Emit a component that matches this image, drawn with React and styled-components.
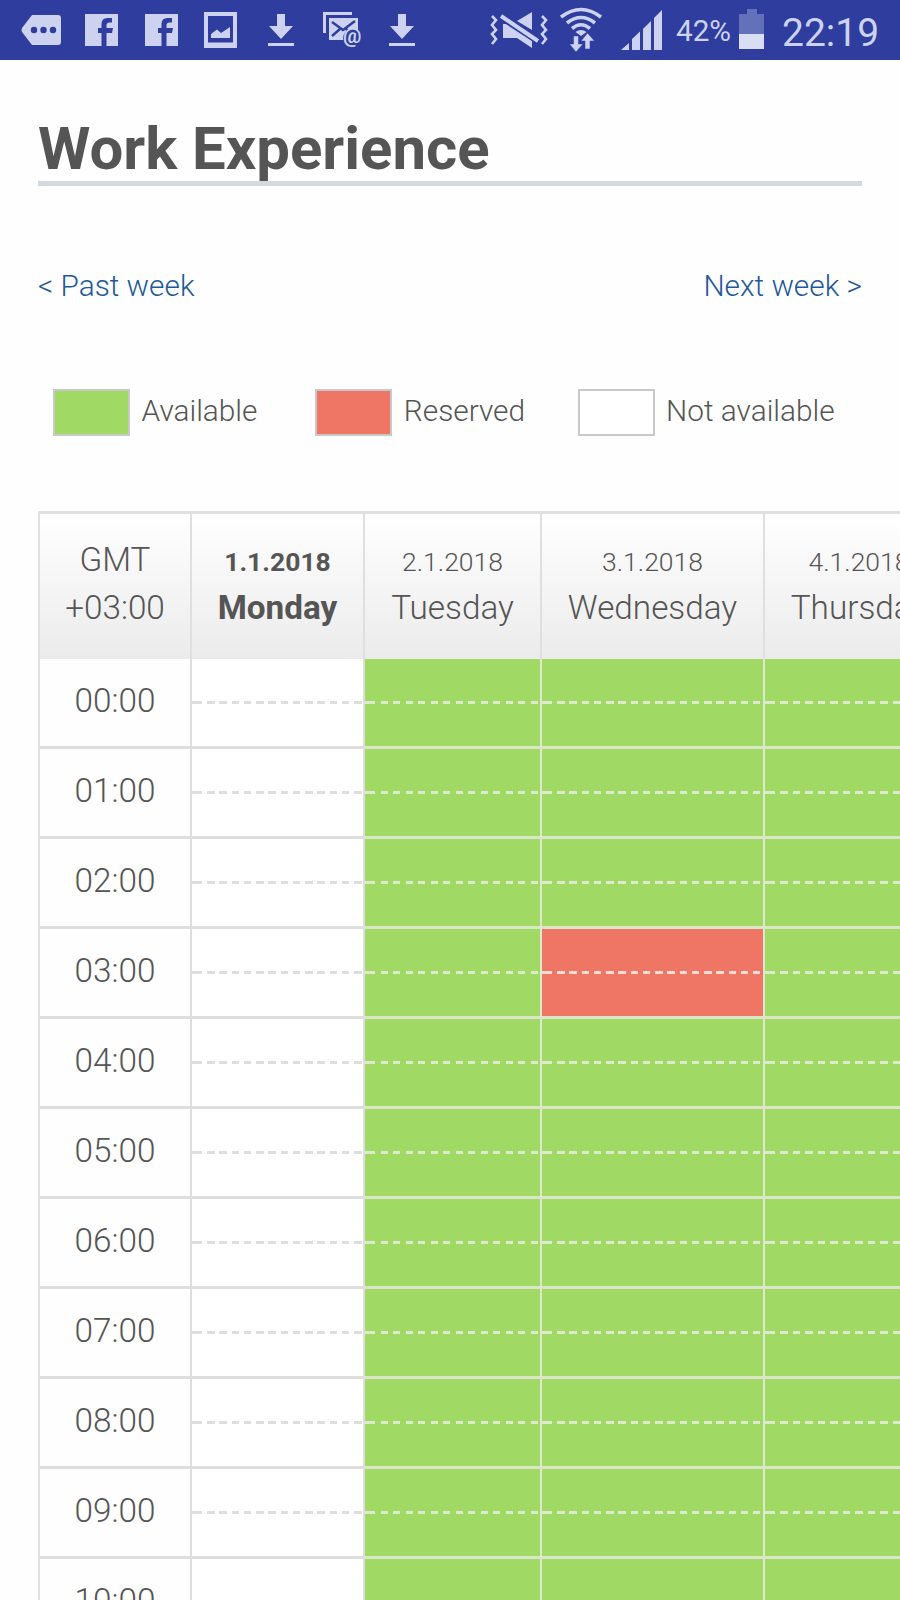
import React from "react";
import styled, { createGlobalStyle } from "styled-components";

const GlobalStyle = createGlobalStyle`
  * { box-sizing: border-box; }
  html, body { margin: 0; padding: 0; background: #fefefe; overflow: hidden; }
`;

const Screen = styled.div`
  width: 900px;
  height: 1600px;
  overflow: hidden;
  background: #fefefe;
  color: #555;
  font-family: Roboto, "Liberation Sans", sans-serif;
  font-weight: 300;
`;

const StatusBar = styled.header`
  display: flex;
  height: 60px;
  background: #2e3d9e;
  color: #ccd2f0;
  line-height: 60px;
  white-space: nowrap;
`;

const Icon = styled.svg`
  flex: none;
  width: ${(p) => p.$w}px;
  height: 60px;
  margin-left: ${(p) => p.$gap}px;
  fill: #ccd2f0;
`;

const BatteryText = styled.span`
  width: 63px;
  margin-left: 14px;
  padding-top: 1px;
  font-size: 29.7px;
  font-weight: 400;
`;

const Clock = styled.span`
  margin-left: 18px;
  padding-top: 3px;
  font-size: 39px;
  font-weight: 400;
`;

const Page = styled.main`
  padding: 54px 0 0 38px;
`;

const Title = styled.h1`
  width: 824px;
  height: 72px;
  margin: 0;
  border-bottom: 5px solid #d3d9dd;
  font-size: 59.9px;
  font-weight: 700;
  line-height: 70px;
  color: #555;
`;

const WeekNav = styled.nav`
  display: flex;
  justify-content: space-between;
  width: 824px;
  margin-top: 79px;
`;

const WeekLink = styled.a`
  font-size: 29.8px;
  line-height: 42px;
  height: 40px;
  color: #1f5a98;
`;

const Legend = styled.div`
  display: grid;
  grid-template-columns: 262.3px 262.3px 1fr;
  margin: 84px 0 75px 15px;
`;

const LegendItem = styled.div`
  display: flex;
  gap: 11.5px;
  height: 47px;
  font-size: 29.8px;
  line-height: 43px;
  white-space: nowrap;
`;

const fills = { available: "#a1d965", reserved: "#ef7564", none: "#fff" };
const lines = { available: "#dfe9cd", reserved: "#f2dcd4", none: "#dedede" };

const Swatch = styled.span`
  width: 77px;
  height: 47px;
  border: 2px solid #c9c9c9;
  background: ${(p) => fills[p.$kind]};
`;

const Calendar = styled.section`
  width: 917px;
  border-top: 3px solid #e0e0e0;
  border-left: 2px solid #e0e0e0;
`;

const Row = styled.div`
  display: grid;
  grid-template-columns: 152px 173px 177px 223px 190px;
`;

const HeadCell = styled.div`
  height: 145px;
  padding-top: 22px;
  border-right: 2px solid #dfdfdf;
  background: linear-gradient(#fff, #ebebeb);
  text-align: center;
  font-weight: ${(p) => (p.$today ? 700 : 300)};
  line-height: 48px;
  white-space: nowrap;
`;

const DateLine = styled.div`
  font-size: ${(p) => (p.$small ? 26.5 : 33.3)}px;
  padding-top: ${(p) => (p.$small ? 2 : 0)}px;
  height: 48px;
`;

const TimeCell = styled.div`
  height: 90px;
  border-right: 2px solid #dedede;
  border-bottom: 3px solid #dedede;
  background: #fefefe;
  text-align: center;
  font-size: 33.3px;
  line-height: 83px;
`;

const Slot = styled.div`
  height: 90px;
  padding-top: 42px;
  border-right: 2px solid ${(p) => (p.$kind === "none" ? "#dedede" : "#dfe7d0")};
  border-bottom: 3px solid ${(p) => (p.$kind === "none" ? "#dedede" : "#dbe5c8")};
  background: ${(p) => fills[p.$kind]};
`;

const HalfHour = styled.div`
  height: 3px;
  background:
    linear-gradient(${(p) => lines[p.$kind]}, ${(p) => lines[p.$kind]}) 0 0 / 4px 3px no-repeat,
    repeating-linear-gradient(
      to right,
      ${(p) => lines[p.$kind]} 0 7.4px,
      transparent 7.4px ${(p) => p.$step}px
    ) 2.6px 0 no-repeat;
`;

const MoreIcon = () => (
  <Icon $w={40} $gap={21} viewBox="0 0 40 60">
    <path d="M11 15H37Q40 15 40 18V42Q40 45 37 45H11L1 32Q0 30 1 28Z" />
    <g fill="#2e3d9e">
      <circle cx="13" cy="30" r="3.2" />
      <circle cx="22.500" cy="30" r="3.2" />
      <circle cx="32" cy="30" r="3.2" />
    </g>
  </Icon>
);

const FacebookIcon = ({ gap }) => (
  <Icon $w={33} $gap={gap} viewBox="0 0 33 60">
    <path d="M0 14H33V46H21.5V33H27L28 28H21.5V25Q21.5 22.5 24.5 22.5H27V18H22.5Q16.5 18 16.5 24V28H13V33H16.5V46H0Z" />
  </Icon>
);

const PictureIcon = () => (
  <Icon $w={33} $gap={26.5} viewBox="0 0 33 60">
    <path fillRule="evenodd" d="M0 12H33V48H0ZM4 16V42.500H29V16Z" />
    <path d="M7 38V34L13 29.500L17 33L26 27V38Z" />
  </Icon>
);

const DownloadIcon = ({ gap }) => (
  <Icon $w={26} $gap={gap} viewBox="0 0 26 60">
    <path d="M9 14H17V26H25L13 39L1 26H9ZM0 43H26V46H0Z" />
  </Icon>
);

const MailIcon = () => (
  <Icon $w={39} $gap={29} viewBox="0 0 39 60">
    <path d="M0 12H29V15H3V33H0Z" />
    <path d="M6 18H35V40H6Z" />
    <path d="M9 22L20 30L32 21M9 36L17 29M23 29L27 32" fill="none" stroke="#2e3d9e" strokeWidth="2.4" />
    <circle cx="29.500" cy="38.500" r="9.500" fill="#2e3d9e" />
    <text x="20" y="43" fontSize="20.500" fontWeight="700" fontFamily="Roboto">@</text>
  </Icon>
);

const MuteIcon = () => (
  <Icon $w={58} $gap={75} viewBox="0 0 58 60">
    <path d="M13 24H19L42 40V48L27 38H13ZM27 21L42 12V30Z" />
    <path d="M11 16L49 41" fill="none" stroke="#2e3d9e" strokeWidth="8" />
    <path d="M11 16L48 41" fill="none" stroke="#ccd2f0" strokeWidth="4" />
    <g fill="none" stroke="#ccd2f0" strokeWidth="2.600">
      <path d="M2 16L6 20L2 25L6 30L2 34L6 39L2 44" />
      <path d="M52 16L56 20L52 25L56 30L52 34L56 39L52 44" />
    </g>
  </Icon>
);

const WifiIcon = () => (
  <Icon $w={42} $gap={12.5} viewBox="0 0 42 60">
    <g fill="none" stroke="#ccd2f0" strokeWidth="3.600">
      <path d="M1 17Q21 2 41 17" />
      <path d="M7 23Q21 12 35 23" />
      <path d="M12 28.500Q21 21 30 28.500" />
    </g>
    <path d="M15.500 32Q21 28 26.500 32L21 36Z" />
    <path d="M13.500 36H18.500V44H23L16 52L9.500 44H13.500ZM25 49H30V41H34.500L27.500 33L21 41H25Z" stroke="#2e3d9e" strokeWidth=".5" />
  </Icon>
);

const SignalIcon = () => (
  <Icon $w={41} $gap={19} viewBox="0 0 41 60">
    <path d="M0 50L8 43V50ZM11 50V39L19 31.500V50ZM22 50V29L30 21V50ZM33 50V18L41 10V50Z" />
  </Icon>
);

const BatteryIcon = () => (
  <Icon $w={25} $gap={0} viewBox="0 0 25 60">
    <path d="M0 14H8V9H18V14H25V34H0Z" fill="#6370ba" />
    <path d="M0 34H25V49H0Z" fill="#dadef2" />
  </Icon>
);

const legend = [
  ["available", "Available"],
  ["reserved", "Reserved"],
  ["none", "Not available"],
];

const days = [
  { date: "1.1.2018", name: "Monday", open: false, step: 12.24 },
  { date: "2.1.2018", name: "Tuesday", open: true, step: 12.5 },
  { date: "3.1.2018", name: "Wednesday", open: true, step: 12.24 },
  { date: "4.1.2018", name: "Thursday", open: true, step: 12.5 },
];

const hours = Array.from({ length: 11 }, (_, h) => String(h).padStart(2, "0") + ":00");

function slotKind(day, hour) {
  if (!day.open) return "none";
  return day.name === "Wednesday" && hour === "03:00" ? "reserved" : "available";
}

export default function App() {
  return (
    <Screen>
      <GlobalStyle />
      <StatusBar>
        <MoreIcon />
        <FacebookIcon gap={24} />
        <FacebookIcon gap={26.5} />
        <PictureIcon />
        <DownloadIcon gap={31} />
        <MailIcon />
        <DownloadIcon gap={26.5} />
        <MuteIcon />
        <WifiIcon />
        <SignalIcon />
        <BatteryText>42%</BatteryText>
        <BatteryIcon />
        <Clock>22:19</Clock>
      </StatusBar>
      <Page>
        <Title>Work Experience</Title>
        <WeekNav>
          <WeekLink>&lt; Past week</WeekLink>
          <WeekLink>Next week &gt;</WeekLink>
        </WeekNav>
        <Legend>
          {legend.map(([kind, label]) => (
            <LegendItem key={kind}>
              <Swatch $kind={kind} />
              {label}
            </LegendItem>
          ))}
        </Legend>
        <Calendar>
          <Row>
            <HeadCell>
              <DateLine>GMT</DateLine>
              <DateLine>+03:00</DateLine>
            </HeadCell>
            {days.map((d, i) => (
              <HeadCell key={d.name} $today={i === 0}>
                <DateLine $small>{d.date}</DateLine>
                <DateLine>{d.name}</DateLine>
              </HeadCell>
            ))}
          </Row>
          {hours.map((h) => (
            <Row key={h}>
              <TimeCell>{h}</TimeCell>
              {days.map((d) => (
                <Slot key={d.name} $kind={slotKind(d, h)}>
                  <HalfHour $kind={slotKind(d, h)} $step={d.step} />
                </Slot>
              ))}
            </Row>
          ))}
        </Calendar>
      </Page>
    </Screen>
  );
}
